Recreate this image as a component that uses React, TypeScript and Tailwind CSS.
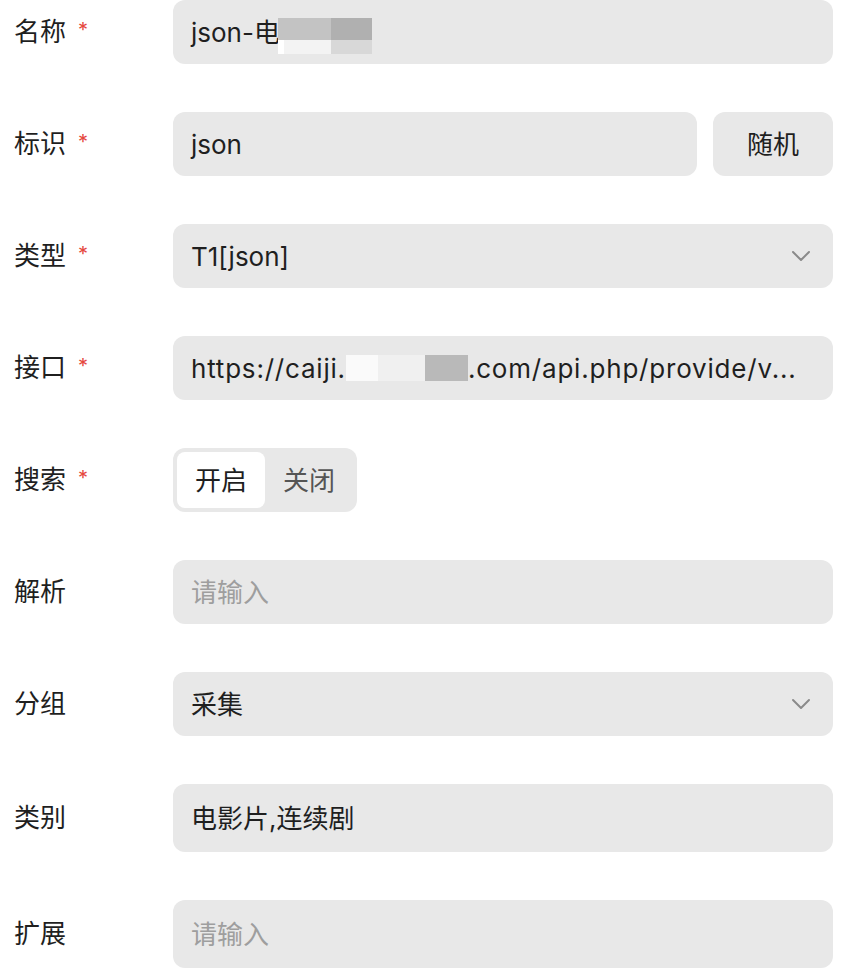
import { ChevronDown } from "lucide-react"

const font = { fontFamily: '"Inter", "Noto Sans CJK SC", sans-serif' }

function Label({ text, required }: { text: string; required?: boolean }) {
  return (
    <div className="w-[159px] shrink-0 flex items-start text-[26px] text-[#1f1f1f] leading-none">
      <span>{text}</span>
      {required && <span className="ml-[12px] mt-[1px] text-[20px] text-[#e5473f] leading-none">*</span>}
    </div>
  )
}

function Box({ children, h = "h-[64px]" }: { children: React.ReactNode; h?: string }) {
  return (
    <div className={`relative flex-1 min-w-0 ${h} rounded-[12px] bg-[#e8e8e8] flex items-center pl-[18px] pr-[24px] text-[26px] text-[#1f1f1f]`}>
      {children}
    </div>
  )
}

export default function App() {
  return (
    <div style={font} className="w-[844px] h-[980px] bg-white pl-[14px] pr-[11px] flex flex-col gap-[48px]">
      <div className="flex items-center">
        <Label text="名称" required />
        <Box>
          <span>json-电</span>
          <div className="absolute left-[105px] top-[18px] w-[94px] h-[36px] flex flex-col">
            <div className="flex h-[22px]">
              <div className="w-[53px] bg-[#c3c3c3]" />
              <div className="flex-1 bg-[#b0b0b0]" />
            </div>
            <div className="flex h-[14px]">
              <div className="w-[6px] bg-white" />
              <div className="w-[47px] bg-[#f3f3f3]" />
              <div className="flex-1 bg-[#d8d8d8]" />
            </div>
          </div>
        </Box>
      </div>

      <div className="flex items-center">
        <Label text="标识" required />
        <div className="flex-1 flex gap-[16px]">
          <Box>json</Box>
          <button className="w-[120px] h-[64px] rounded-[12px] bg-[#e8e8e8] text-[26px] text-[#1f1f1f]">随机</button>
        </div>
      </div>

      <div className="flex items-center">
        <Label text="类型" required />
        <Box>
          <span className="flex-1">T1[json]</span>
          <ChevronDown className="w-[32px] h-[32px] text-[#8a8a8a] -mr-[8px]" strokeWidth={1.5} />
        </Box>
      </div>

      <div className="flex items-center">
        <Label text="接口" required />
        <Box>
          <span className="shrink-0 tracking-[0.8px]">https://caiji.</span>
          <div className="shrink-0 w-[122px] h-[26px] flex">
            <div className="w-[32px] bg-[#fafafa]" />
            <div className="w-[47px] bg-[#f0f0f0]" />
            <div className="flex-1 bg-[#b9b9b9]" />
          </div>
          <span className="min-w-0 truncate tracking-[0.8px]">.com/api.php/provide/v...</span>
        </Box>
      </div>

      <div className="flex items-center">
        <Label text="搜索" required />
        <div className="h-[64px] w-[184px] rounded-[12px] bg-[#e8e8e8] p-[4px] flex text-[26px]">
          <div className="w-[88px] rounded-[8px] bg-white flex items-center justify-center text-[#1f1f1f]">开启</div>
          <div className="w-[88px] flex items-center justify-center text-[#555555]">关闭</div>
        </div>
      </div>

      <div className="flex items-center">
        <Label text="解析" />
        <Box>
          <span className="text-[#9e9e9e]">请输入</span>
        </Box>
      </div>

      <div className="flex items-center">
        <Label text="分组" />
        <Box>
          <span className="flex-1">采集</span>
          <ChevronDown className="w-[32px] h-[32px] text-[#8a8a8a] -mr-[8px]" strokeWidth={1.5} />
        </Box>
      </div>

      <div className="flex items-center">
        <Label text="类别" />
        <Box h="h-[68px]">电影片,连续剧</Box>
      </div>

      <div className="flex items-center">
        <Label text="扩展" />
        <Box h="h-[68px]">
          <span className="text-[#9e9e9e]">请输入</span>
        </Box>
      </div>
    </div>
  )
}
